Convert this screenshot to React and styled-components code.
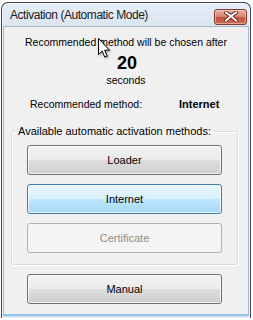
import React from "react";
import styled, { createGlobalStyle } from "styled-components";

const Global = createGlobalStyle`
  html, body { margin: 0; padding: 0; background: #ffffff; }
  body { font-family: "Liberation Sans", Arial, sans-serif; font-size: 10.5px; color: #000; }
  * { box-sizing: border-box; }
`;

const Window = styled.div`
  position: relative;
  margin: 2px 0 0 1px;
  width: 250px;
  height: 316px;
  border: 1px solid #3b4450;
  border-bottom: none;
  border-radius: 7px 7px 0 0;
  background: linear-gradient(#e6eef7, #d7e2ee 30px, #cbd8e7);
  padding: 0 1px 2px 1px;
  display: flex;
  flex-direction: column;
  overflow: hidden;
  box-shadow: inset 0 0 0 1px #f4f8fc;
`;

const TitleBar = styled.div`
  height: 23px;
  flex: none;
  display: flex;
  align-items: center;
  justify-content: space-between;
  padding: 0 2px 0 7px;
`;

const Title = styled.div`
  font-size: 12px;
  color: #1b1b1b;
  letter-spacing: -0.45px;
  margin-top: 0px;
`;

const CloseButton = styled.div`
  width: 33px;
  height: 16px;
  margin-top: 4px;
  border: 1px solid #7a3a30;
  border-radius: 3px;
  background: linear-gradient(#e8b0a4, #d98672 45%, #c4533c 55%, #cf6a54);
  box-shadow: inset 0 0 0 1px rgba(255, 225, 215, 0.5);
  display: flex;
  align-items: center;
  justify-content: center;
`;

const Client = styled.div`
  flex: 1;
  background: #f0f0f0;
  border: 1px solid #a7b5c4;
  border-bottom: 2px solid #8fc6ea;
  padding: 8px 10px 0 7px;
  display: flex;
  flex-direction: column;
`;

const Line = styled.div`
  text-align: center;
  line-height: 14px;
  padding-left: 3px;
  margin-top: ${(p) => p.top || 0}px;
`;

const Counter = styled.div`
  text-align: center;
  font-size: 18px;
  font-weight: 700;
  line-height: 18px;
  margin: 5px 0 0 5px;
`;

const MethodRow = styled.div`
  display: grid;
  grid-template-columns: 149px auto;
  line-height: 14px;
  padding-left: 19px;
  margin-top: 10px;
`;

const Bold = styled.span`
  font-weight: 700;
  font-size: 11px;
`;

const Group = styled.fieldset`
  margin: 13px 0 0 0;
  padding: 7px 15px 11px 15px;
  border: 1px solid #d5dfe5;
  border-radius: 3px;
  box-shadow: inset 1px 1px 0 #ffffff, 1px 1px 0 #ffffff;
  display: flex;
  flex-direction: column;
  gap: 9px;
  width: 227px;
  min-width: 0;
`;

const Legend = styled.legend`
  padding: 0 2px 0 1px;
  margin-left: -10px;
  line-height: 14px;
  font-size: 11px;
  white-space: nowrap;
`;

const Button = styled.div`
  height: 30px;
  width: 195px;
  flex: none;
  border: 1px solid ${(p) => (p.variant === "focus" ? "#3c7fb1" : p.variant === "disabled" ? "#adb2b5" : "#707070")};
  border-radius: 3px;
  display: flex;
  align-items: center;
  justify-content: center;
  font-size: 11px;
  color: ${(p) => (p.variant === "disabled" ? "#8d8d8d" : "#000")};
  background: ${(p) =>
    p.variant === "focus"
      ? "linear-gradient(#eaf6fd, #d9f0fc 50%, #bee6fd 50%, #a7d9f5)"
      : p.variant === "disabled"
      ? "#f4f4f4"
      : "linear-gradient(#f2f2f2, #ebebeb 50%, #dddddd 50%, #cfcfcf)"};
  box-shadow: ${(p) =>
    p.variant === "disabled" ? "none" : "inset 0 0 0 1px rgba(255,255,255,0.75)"};
  margin-left: ${(p) => p.indent || 0}px;
  margin-top: ${(p) => p.top || 0}px;
`;

const Cursor = styled.svg`
  position: absolute;
  left: 96px;
  top: 35px;
  filter: drop-shadow(1px 1px 1px rgba(0, 0, 0, 0.35));
`;

export default function App() {
  return (
    <>
      <Global />
      <Window>
        <TitleBar>
          <Title>Activation (Automatic Mode)</Title>
          <CloseButton>
            <svg width="14" height="11" viewBox="0 0 14 11">
              <path
                d="M2 1.5 L7 5 L12 1.5 M2 9.5 L7 5 L12 9.5"
                stroke="#5a1a12"
                strokeWidth="3.6"
                fill="none"
                strokeLinecap="square"
              />
              <path
                d="M2 1.5 L7 5 L12 1.5 M2 9.5 L7 5 L12 9.5"
                stroke="#ffffff"
                strokeWidth="2"
                fill="none"
                strokeLinecap="square"
              />
            </svg>
          </CloseButton>
        </TitleBar>
        <Client>
          <Line>Recommended method will be chosen after</Line>
          <Counter>20</Counter>
          <Line top={1}>seconds</Line>
          <MethodRow>
            <span>Recommended method:</span>
            <Bold>Internet</Bold>
          </MethodRow>
          <Group>
            <Legend>Available automatic activation methods:</Legend>
            <Button>Loader</Button>
            <Button variant="focus">Internet</Button>
            <Button variant="disabled">Certificate</Button>
          </Group>
          <Button indent={16} top={9}>Manual</Button>
        </Client>
        <Cursor width="13" height="21" viewBox="0 0 13 21">
          <path
            d="M0.5 0.5 L0.5 16.5 L4.2 13 L6.8 19.2 L9.2 18.2 L6.6 12.2 L11.5 12.2 Z"
            fill="#ffffff"
            stroke="#000000"
            strokeWidth="1"
            strokeLinejoin="miter"
          />
        </Cursor>
      </Window>
    </>
  );
}
